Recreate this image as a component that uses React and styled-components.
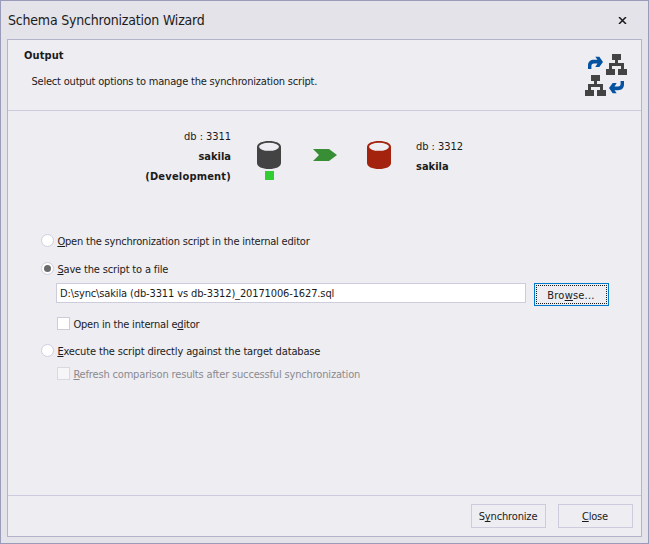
import React from "react";
import styled, { createGlobalStyle } from "styled-components";

const GlobalStyle = createGlobalStyle`
  * { box-sizing: border-box; }
  body {
    margin: 0;
    overflow: hidden;
    color: #1b1b1b;
    font: 11px/14px "DejaVu Sans Condensed", "DejaVu Sans", sans-serif;
  }
`;

const Dialog = styled.div`
  display: flex;
  flex-direction: column;
  width: 649px;
  height: 544px;
  padding: 0 6px 6px;
  background: #e4e3e9;
  border: 1px solid #9a9ab9;
`;

const TitleBar = styled.header`
  display: flex;
  align-items: center;
  justify-content: space-between;
  height: 38px;
  padding: 0 15px 0 1px;
`;

const Title = styled.h1`
  margin: 0;
  font-size: 14px;
  line-height: 18px;
  font-weight: 400;
  letter-spacing: -0.2px;
`;

const CloseIcon = styled.svg`
  display: block;
  width: 9px;
  height: 7px;
`;

const Panel = styled.main`
  flex: 1;
  display: flex;
  flex-direction: column;
  background: #eeedf2;
  border: 1px solid #b3b4cb;
`;

const PageHeader = styled.section`
  display: flex;
  justify-content: space-between;
  height: 71px;
  padding: 9px 13px 0 16px;
  border-bottom: 1px solid #ccccdc;
`;

const PageTitle = styled.h2`
  margin: 0 0 12px;
  font-size: 11px;
  line-height: 14px;
  font-weight: 700;
  letter-spacing: 0.1px;
`;

const Text = styled.span`
  white-space: pre;
  letter-spacing: ${(p) => p.$track || 0}px;
  font-weight: ${(p) => (p.$bold ? 700 : 400)};
`;

const AccessText = styled(Text)`
  margin-top: 2px;
`;

const PageNote = styled.p`
  margin: 0 0 0 7.4px;
`;

const SyncIcon = styled.svg`
  display: block;
  width: 44px;
  height: 44px;
  margin-top: 4px;
`;

const Body = styled.section`
  flex: 1;
  padding: 18px 30px 0 33px;
`;

const Databases = styled.div`
  display: flex;
  align-items: flex-start;
  height: 105px;
`;

const DbLabel = styled.div`
  display: flex;
  flex-direction: column;
  gap: 6px;
  width: ${(p) => (p.$source ? "190px" : "auto")};
  margin: ${(p) => (p.$source ? "1px 26px 0 0" : "11px 0 0 25px")};
  align-items: ${(p) => (p.$source ? "flex-end" : "flex-start")};
`;

const DbIcon = styled.div`
  width: 24px;
  padding-top: 12px;
  svg { display: block; }
`;

const Status = styled.div`
  width: 9px;
  height: 9px;
  margin: 2px 0 0 8px;
  background: #32cd32;
`;

const Arrow = styled.svg`
  display: block;
  width: 24px;
  height: 12px;
  margin: 20px 30px 0 32px;
`;

const Option = styled.label`
  display: flex;
  align-items: flex-start;
  height: 14px;
  margin: ${(p) => p.$top}px 0 0 ${(p) => (p.$nested ? 16 : 0)}px;
  color: ${(p) => (p.$disabled ? "#8a8a8e" : "#1b1b1b")};
`;

const OptionMark = styled.span`
  flex: none;
  width: 13px;
  height: 13px;
  margin-right: 3px;
`;

const Radio = styled(OptionMark)`
  display: flex;
  align-items: center;
  justify-content: center;
  border: 1px solid #cfcfde;
  border-radius: 50%;
  background: #fff;
`;

const Dot = styled.span`
  width: 7px;
  height: 7px;
  border-radius: 50%;
  background: #6a6a6a;
`;

const Checkbox = styled(OptionMark)`
  border: 1px solid ${(p) => (p.$disabled ? "#d9d9e4" : "#ccccdc")};
  background: ${(p) => (p.$disabled ? "#f6f6f9" : "#fff")};
`;

const OptionText = styled.span`
  padding: 1px 0 0 0.4px;
`;

const Key = styled.span`
  text-decoration: underline;
  text-decoration-thickness: 1px;
  text-decoration-skip-ink: none;
  text-underline-offset: 1px;
`;

const FileRow = styled.div`
  display: flex;
  align-items: flex-start;
  gap: 8px;
  margin: 7px 0 0 15px;
`;

const PathField = styled.div`
  flex: none;
  width: 470px;
  height: 20px;
  padding: 3px 2px 0 3px;
  border: 1px solid #ccccdc;
  background: #fff;
`;

const Button = styled.button`
  display: flex;
  flex: none;
  align-items: center;
  justify-content: center;
  width: 75px;
  height: 24px;
  padding: 0 1px 0 0;
  border: 1px solid #ccccdc;
  background: #eeedf2;
  color: inherit;
  font: inherit;
`;

const FocusedButton = styled(Button)`
  height: 23px;
  padding: 1px;
  border-color: #007acc;
`;

const FocusRing = styled.span`
  flex: 1;
  height: 19px;
  display: flex;
  align-items: center;
  justify-content: center;
  padding-right: 1px;
  border: 1px dotted #1b1b1b;
`;

const Footer = styled.footer`
  display: flex;
  justify-content: flex-end;
  gap: 12px;
  height: 41px;
  padding: 8px 8px 0 0;
  border-top: 1px solid #ccccdc;
`;

/* A caption with one underlined access-key letter. */
function Caption({ text, at, track }) {
  return (
    <AccessText $track={track}>
      {text.slice(0, at)}
      <Key>{text[at]}</Key>
      {text.slice(at + 1)}
    </AccessText>
  );
}

function Cylinder({ color }) {
  return (
    <svg width="24" height="28" viewBox="0 0 24 28">
      <path d="M0 6C0 2.200 5.200 0 12 0s12 2.200 12 6v16c0 3.800-5.200 6-12 6S0 25.800 0 22z" fill={color} />
      <ellipse cx="12" cy="5.800" rx="10" ry="4" fill="#eeedf2" />
    </svg>
  );
}

function Tree({ x, y }) {
  return (
    <g transform={`translate(${x} ${y})`} fill="#434343" shapeRendering="crispEdges">
      <path d="M6 0h9v6h-3v3h6v6h3v6h-9v-6h3v-3H6v3h3v6H0v-6h3V9h6V6H6z" />
    </g>
  );
}

export default function App() {
  return (
    <Dialog>
      <GlobalStyle />
      <TitleBar>
        <Title>Schema Synchronization Wizard</Title>
        <CloseIcon viewBox="0 0 9 7">
          <path d="M1 0L8 7M8 0L1 7" stroke="#1b1b1b" strokeWidth="1.5" />
        </CloseIcon>
      </TitleBar>
      <Panel>
        <PageHeader>
          <div>
            <PageTitle>Output</PageTitle>
            <PageNote>
              <Text $track={-0.19}>Select output options to manage the synchronization script.</Text>
            </PageNote>
          </div>
          <SyncIcon viewBox="0 0 44 44">
            <Tree x={22} y={1} />
            <Tree x={1} y={22} />
            <g fill="#0553a0">
              <path d="M4 16V12.500C4 8.600 6.500 6.800 10 6.800h3.500L11.300 3.800H15.300L19 8.900 15.300 14H11.300L13.500 10.600H10C8.200 10.600 7.400 11.500 7.400 13v3z" />
              <path d="M40 28v3.500c0 3.900-2.500 5.700-6 5.700h-3.500L32.700 40.200H28.700L25 35.100 28.700 30H32.700L30.500 33.400h3.500c1.800 0 2.600-.9 2.600-2.400v-3z" />
            </g>
          </SyncIcon>
        </PageHeader>
        <Body>
          <Databases>
            <DbLabel $source>
              <Text $track={-0.05}>db : 3311</Text>
              <Text $bold>sakila</Text>
              <Text $bold $track={0.2}>(Development)</Text>
            </DbLabel>
            <DbIcon>
              <Cylinder color="#434343" />
              <Status />
            </DbIcon>
            <Arrow viewBox="0 0 24 12">
              <path d="M0 0h16l8 6-8 6H0l6-6z" fill="#388e34" />
            </Arrow>
            <DbIcon>
              <Cylinder color="#a4230e" />
            </DbIcon>
            <DbLabel>
              <Text $track={-0.05}>db : 3312</Text>
              <Text $bold>sakila</Text>
            </DbLabel>
          </Databases>
          <Option $top={0}>
            <Radio />
            <OptionText>
              <Caption text="Open the synchronization script in the internal editor" at={0} track={-0.195} />
            </OptionText>
          </Option>
          <Option $top={14}>
            <Radio><Dot /></Radio>
            <OptionText>
              <Caption text="Save the script to a file" at={0} track={-0.16} />
            </OptionText>
          </Option>
          <FileRow>
            <PathField>
              <Text $track={-0.13}>{"D:\\sync\\sakila (db-3311 vs db-3312)_20171006-1627.sql"}</Text>
            </PathField>
            <FocusedButton>
              <FocusRing><Caption text="Browse..." at={3} track={0.2} /></FocusRing>
            </FocusedButton>
          </FileRow>
          <Option $top={11} $nested>
            <Checkbox />
            <OptionText>
              <Caption text="Open in the internal editor" at={22} track={-0.2} />
            </OptionText>
          </Option>
          <Option $top={13}>
            <Radio />
            <OptionText>
              <Caption text="Execute the script directly against the target database" at={0} track={-0.145} />
            </OptionText>
          </Option>
          <Option $top={9} $nested $disabled>
            <Checkbox $disabled />
            <OptionText>
              <Caption text="Refresh comparison results after successful synchronization" at={0} track={-0.168} />
            </OptionText>
          </Option>
        </Body>
        <Footer>
          <Button><Caption text="Synchronize" at={1} track={-0.15} /></Button>
          <Button><Caption text="Close" at={0} track={-0.2} /></Button>
        </Footer>
      </Panel>
    </Dialog>
  );
}
